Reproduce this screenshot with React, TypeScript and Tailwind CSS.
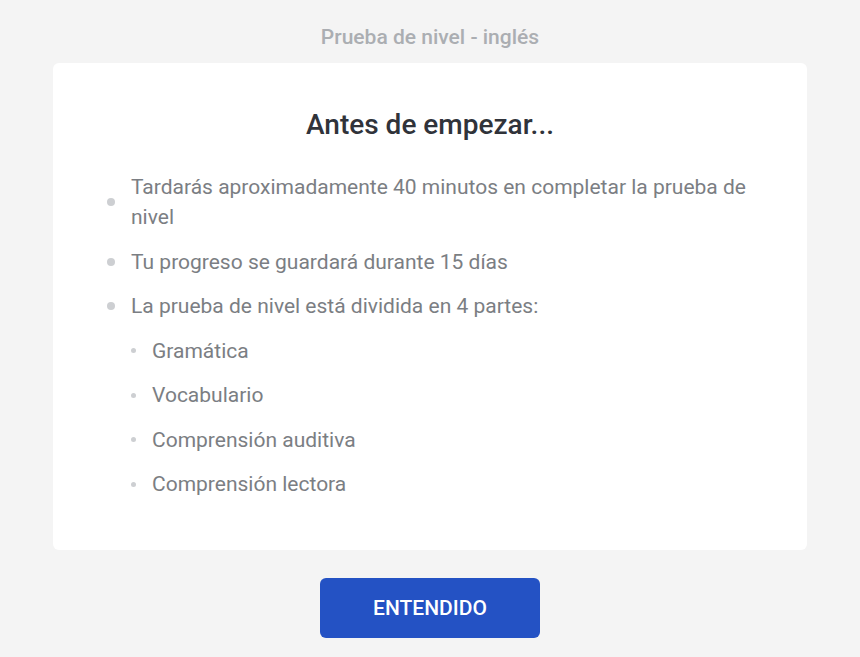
const ITEMS = [
  'Tardarás aproximadamente 40 minutos en completar la prueba de nivel',
  'Tu progreso se guardará durante 15 días',
  'La prueba de nivel está dividida en 4 partes:',
];

const PARTS = ['Gramática', 'Vocabulario', 'Comprensión auditiva', 'Comprensión lectora'];

export default function App() {
  return (
    <div className="min-h-screen bg-[#f4f4f4] font-['Roboto',sans-serif] flex flex-col items-center pt-[23px]">
      <p className="text-[21px] leading-[28px] font-medium text-[#abaeb2]">Prueba de nivel - inglés</p>

      {/* Card */}
      <div className="mt-[12px] w-[754px] bg-white rounded-[6px] px-[54px] pt-[45px] pb-[51px]">
        <h1 className="text-center text-[28px] leading-[34px] font-medium text-[#30333a]">Antes de empezar...</h1>

        <ul className="mt-[30px] flex flex-col gap-[14.5px]">
          {ITEMS.map((item) => (
            <li key={item} className="flex items-center gap-[16px]">
              <span className="w-[8px] h-[8px] shrink-0 rounded-full bg-[#cdcfd2]" />
              <span className="text-[21px] leading-[30px] text-[#7b7e83]">{item}</span>
            </li>
          ))}
          {PARTS.map((part) => (
            <li key={part} className="flex items-center gap-[16px] pl-[24px]">
              <span className="w-[5px] h-[5px] shrink-0 rounded-full bg-[#cdcfd2]" />
              <span className="text-[21px] leading-[30px] text-[#7b7e83]">{part}</span>
            </li>
          ))}
        </ul>
      </div>

      <button className="mt-[28px] w-[220px] h-[60px] rounded-[6px] bg-[#2452c4] text-white text-[21px] font-medium pt-[2px]">
        ENTENDIDO
      </button>
    </div>
  );
}
